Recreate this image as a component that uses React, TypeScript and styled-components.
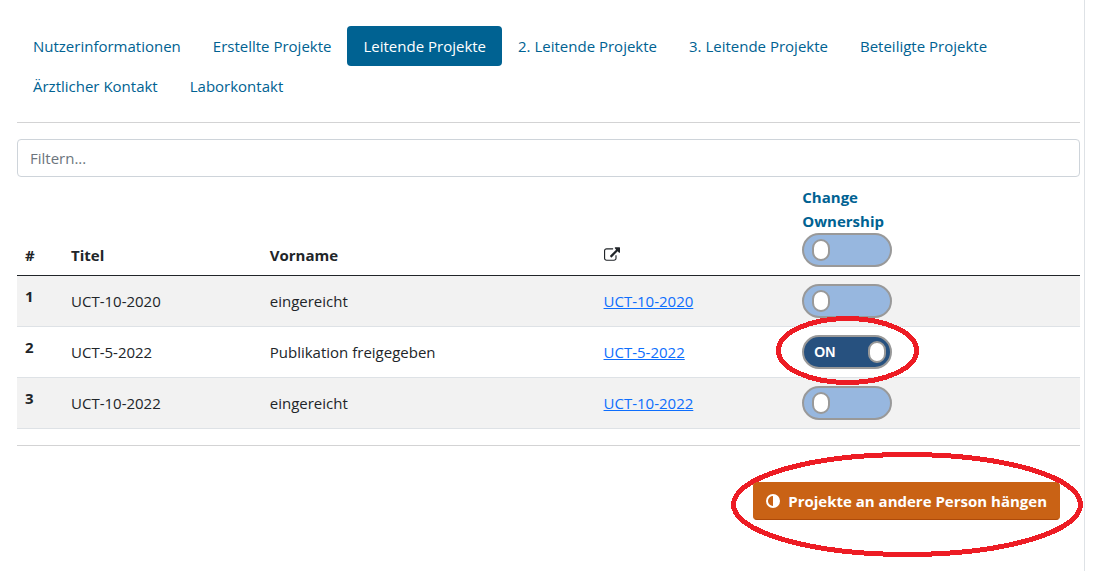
import React, { useState } from "react";
import styled, { createGlobalStyle } from "styled-components";

const GlobalStyle = createGlobalStyle`
  *, *::before, *::after { box-sizing: border-box; }
  body {
    margin: 0;
    background: #fff;
    color: #212529;
    font-family: "Segoe UI", "Open Sans", "Noto Sans", sans-serif;
    font-size: 15px;
    line-height: 24px;
  }
`;

const Panel = styled.main`
  min-height: 100vh;
  margin-right: 8px;
  padding: 26px 4px 16px 17px;
  border-right: 1px solid #dee2e6;
`;

const Tabs = styled.nav`
  display: flex;
  flex-wrap: wrap;
`;

const Tab = styled.button<{ $active: boolean }>`
  height: 40px;
  padding: 8px 16px;
  border: 0;
  border-radius: 4px;
  background: ${(p) => (p.$active ? "#006292" : "transparent")};
  color: ${(p) => (p.$active ? "#fff" : "#006292")};
  font: inherit;
  white-space: nowrap;
  cursor: pointer;
`;

const Divider = styled.hr`
  height: 1px;
  margin: 16px 0;
  border: 0;
  background: #d3d3d4;
`;

const Filter = styled.input`
  display: block;
  width: 100%;
  height: 38px;
  padding: 6px 12px;
  border: 1px solid #ced4da;
  border-radius: 4px;
  color: #212529;
  font: inherit;
  &::placeholder { color: #6c757d; opacity: 1; }
`;

const Table = styled.table`
  width: 100%;
  table-layout: fixed;
  border-collapse: separate;
  border-spacing: 0;
`;

const Col = styled.col<{ $width: string }>`
  width: ${(p) => p.$width};
`;

const HeadCell = styled.th`
  padding: 8px;
  border-bottom: 1px solid #212529;
  text-align: left;
  vertical-align: bottom;
`;

const Row = styled.tr`
  &:nth-child(odd) { background: #f2f2f2; }
`;

const RowHead = styled.th`
  padding: 8px;
  border-bottom: 1px solid #dee2e6;
  text-align: left;
  vertical-align: top;
`;

const Cell = styled.td`
  padding: 8px;
  border-bottom: 1px solid #dee2e6;
  vertical-align: middle;
`;

const ProjectLink = styled.a`
  color: #0d6efd;
`;

const OwnershipTitle = styled.span`
  display: block;
  color: #006292;
`;

const Anchor = styled.div`
  position: relative;
  width: fit-content;
`;

const SwitchLabel = styled.label`
  position: relative;
  display: block;
  width: 90px;
  height: 34px;
  cursor: pointer;
`;

const SwitchInput = styled.input`
  position: absolute;
  inset: 0;
  width: 100%;
  height: 100%;
  margin: 0;
  opacity: 0;
  cursor: pointer;
`;

const Track = styled.span<{ $on: boolean }>`
  display: flex;
  align-items: center;
  justify-content: ${(p) => (p.$on ? "space-between" : "flex-start")};
  width: 100%;
  height: 100%;
  padding: 0 ${(p) => (p.$on ? "4px 0 10px" : "8px")};
  border: 2px solid #999;
  border-radius: 20px;
  background: ${(p) => (p.$on ? "#27517f" : "#97b7df")};
  color: #fff;
  font: bold 14px "Liberation Sans", Arial, sans-serif;
`;

const Knob = styled.span`
  width: 18px;
  height: 22px;
  border: 2px solid #999;
  border-radius: 9px;
  background: #fff;
`;

const Ring = styled.svg`
  position: absolute;
  overflow: visible;
  pointer-events: none;
  fill: none;
  stroke: #ed1c24;
  stroke-width: 5px;
  shape-rendering: crispEdges;
`;

const SwitchRing = styled(Ring)`
  left: -26px;
  top: -19px;
`;

const ButtonRing = styled(Ring)`
  left: -22px;
  top: -30px;
`;

const Actions = styled.div`
  display: flex;
  justify-content: flex-end;
  padding: 20px 20px 0;
`;

const MoveButton = styled.button`
  display: flex;
  align-items: center;
  gap: 8px;
  height: 38px;
  padding: 0 12px;
  border: 1px solid #c96215;
  border-bottom-color: #ad4a0a;
  border-radius: 4px;
  background: #c96215;
  color: #fff;
  font: inherit;
  font-weight: 700;
  white-space: nowrap;
  cursor: pointer;
`;

const ExternalIcon = () => (
  <svg width="16" height="14" viewBox="0 0 1792 1536" fill="currentColor" role="img" aria-label="Link">
    <path d="M1408 928v320q0 119-84.5 203.5T1120 1536H288q-119 0-203.5-84.5T0 1248V416q0-119 84.5-203.5T288 128h704q14 0 23 9t9 23v64q0 14-9 23t-23 9H288q-66 0-113 47t-47 113v832q0 66 47 113t113 47h832q66 0 113-47t47-113V928q0-14 9-23t23-9h64q14 0 23 9t9 23zM1792 64v512q0 26-19 45t-45 19-45-19l-150-150-652 652q-24 24-56 24t-56-24l-68-68q-24-24-24-56t24-56l652-652-130-158q-19-19-19-45t19-45 45-19h464q26 0 45 19t19 45z" />
  </svg>
);

const HalfIcon = () => (
  <svg width="14" height="14" viewBox="0 0 14 14" fill="none" aria-hidden="true">
    <circle cx="7" cy="7" r="6" stroke="currentColor" strokeWidth="2" />
    <path d="M7 1a6 6 0 0 1 0 12z" fill="currentColor" />
  </svg>
);

function Switch({ name, on, onChange }: { name: string; on: boolean; onChange: () => void }) {
  return (
    <SwitchLabel>
      <SwitchInput type="checkbox" role="switch" aria-label={name} checked={on} onChange={onChange} />
      <Track $on={on}>
        {on && "ON"}
        <Knob />
      </Track>
    </SwitchLabel>
  );
}

const tabs = [
  "Nutzerinformationen",
  "Erstellte Projekte",
  "Leitende Projekte",
  "2. Leitende Projekte",
  "3. Leitende Projekte",
  "Beteiligte Projekte",
  "Ärztlicher Kontakt",
  "Laborkontakt",
];

const projects = [
  { title: "UCT-10-2020", status: "eingereicht" },
  { title: "UCT-5-2022", status: "Publikation freigegeben", marked: true },
  { title: "UCT-10-2022", status: "eingereicht" },
];

export default function App() {
  const [active, setActive] = useState(2);
  const [selected, setSelected] = useState([false, true, false]);
  const [filter, setFilter] = useState("");
  const all = selected.every(Boolean);

  return (
    <>
      <GlobalStyle />
      <Panel>
        <Tabs>
          {tabs.map((tab, i) => (
            <Tab key={tab} type="button" $active={i === active} onClick={() => setActive(i)}>
              {tab}
            </Tab>
          ))}
        </Tabs>
        <Divider />
        <Filter
          type="text"
          aria-label="Filtern"
          placeholder="Filtern..."
          value={filter}
          onChange={(e) => setFilter(e.target.value)}
        />
        <Table>
          <colgroup>
            <Col $width="46px" />
            <Col $width="18.7%" />
            <Col $width="31.4%" />
            <Col $width="18.7%" />
            <Col $width="auto" />
          </colgroup>
          <thead>
            <tr>
              <HeadCell scope="col">#</HeadCell>
              <HeadCell scope="col">Titel</HeadCell>
              <HeadCell scope="col">Vorname</HeadCell>
              <HeadCell scope="col"><ExternalIcon /></HeadCell>
              <HeadCell scope="col">
                <OwnershipTitle>Change<br />Ownership</OwnershipTitle>
                <Switch name="Change Ownership" on={all} onChange={() => setSelected(selected.map(() => !all))} />
              </HeadCell>
            </tr>
          </thead>
          <tbody>
            {projects.map((p, i) => (
              <Row key={p.title} hidden={!p.title.toLowerCase().includes(filter.toLowerCase())}>
                <RowHead scope="row">{i + 1}</RowHead>
                <Cell>{p.title}</Cell>
                <Cell>{p.status}</Cell>
                <Cell><ProjectLink href="#">{p.title}</ProjectLink></Cell>
                <Cell>
                  <Anchor>
                    <Switch
                      name={p.title}
                      on={selected[i]}
                      onChange={() => setSelected(selected.map((s, j) => (j === i ? !s : s)))}
                    />
                    {p.marked && (
                      <SwitchRing width="143" height="69" aria-hidden="true">
                        <ellipse cx="71.5" cy="34.5" rx="69" ry="32" />
                      </SwitchRing>
                    )}
                  </Anchor>
                </Cell>
              </Row>
            ))}
          </tbody>
        </Table>
        <Divider />
        <Actions>
          <Anchor>
            <MoveButton type="button">
              <HalfIcon />
              Projekte an andere Person hängen
            </MoveButton>
            <ButtonRing width="352" height="105" aria-hidden="true">
              <ellipse cx="176" cy="52.5" rx="173.5" ry="50" />
            </ButtonRing>
          </Anchor>
        </Actions>
      </Panel>
    </>
  );
}
